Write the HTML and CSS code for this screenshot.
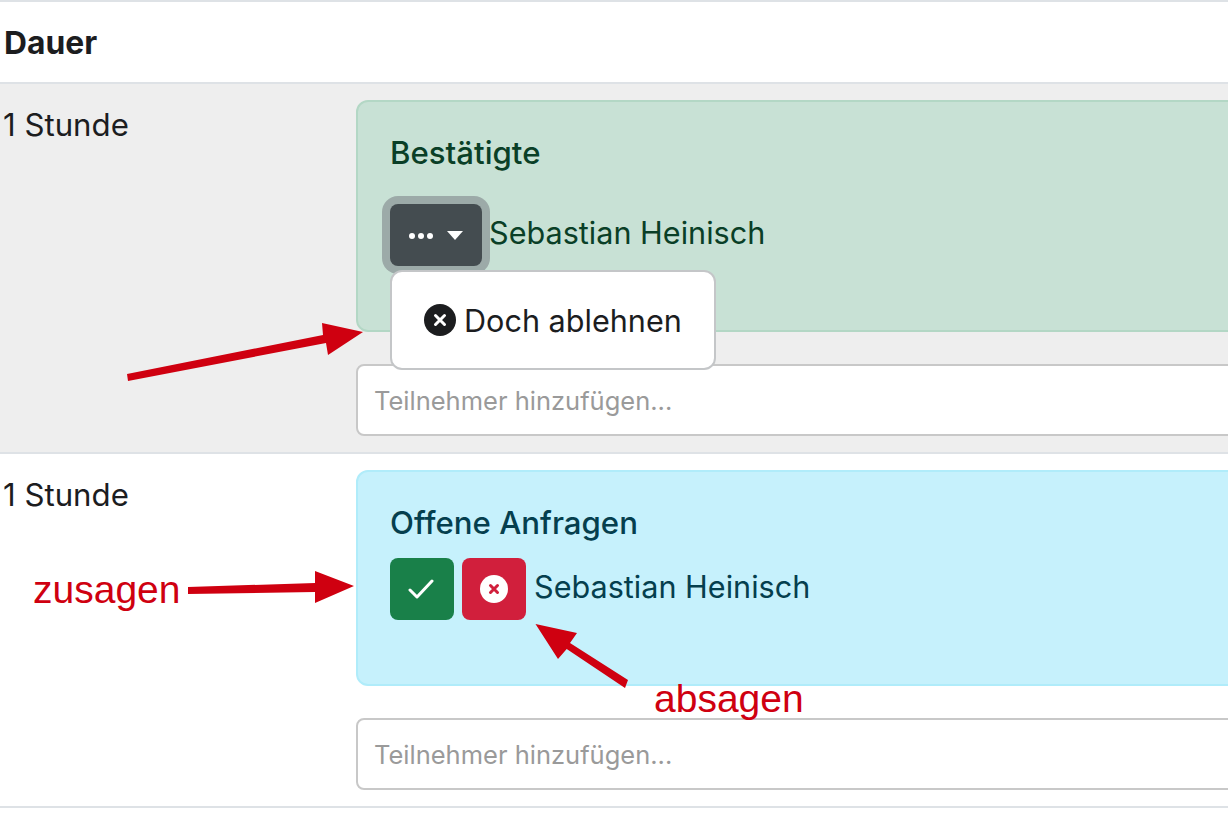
FILE: index.html
```html
<!DOCTYPE html>
<html lang="de">
<head>
<meta charset="utf-8">
<title>Dauer</title>
<link rel="stylesheet" href="styles.css">
</head>
<body>
<div class="table">
  <div class="head">Dauer</div>
  <div class="row row-grey">
    <div class="duration">1 Stunde</div>
    <div class="main">
      <div class="alert alert-green">
        <h4 class="title">Bestätigte</h4>
        <div class="person">
          <button class="btn btn-dark"><span class="dots"><i></i><i></i><i></i></span><span class="caret"></span></button>
          <span class="name">Sebastian Heinisch</span>
        </div>
        <div class="menu">
          <svg class="menu-icon" viewBox="0 0 32 32"><circle cx="16" cy="16" r="16" fill="#1c1d1f"/><path d="M11.5 11.5l9 9M20.5 11.500l-9 9" stroke="#fff" stroke-width="3" stroke-linecap="round"/></svg>
          <span>Doch ablehnen</span>
        </div>
      </div>
      <div class="input">Teilnehmer hinzufügen...</div>
    </div>
  </div>
  <div class="row">
    <div class="duration">1 Stunde</div>
    <div class="main">
      <div class="alert alert-blue">
        <h4 class="title">Offene Anfragen</h4>
        <div class="person person-tight">
          <button class="btn btn-green"><svg class="check" viewBox="0 0 26 20"><path d="M2 11l7 7L24 2" fill="none" stroke="#fff" stroke-width="3" stroke-linecap="round" stroke-linejoin="round"/></svg></button>
          <button class="btn btn-red"><svg class="x-icon" viewBox="0 0 28 28"><circle cx="14" cy="14" r="14" fill="#fff"/><path d="M10.500 10.500l7 7M17.500 10.500l-7 7" stroke="#d11f3c" stroke-width="3" stroke-linecap="round"/></svg></button>
          <span class="name name-blue">Sebastian Heinisch</span>
        </div>
      </div>
      <div class="input">Teilnehmer hinzufügen...</div>
    </div>
  </div>
</div>
<svg class="arrows" viewBox="0 0 1228 836">
  <g fill="#cf0010">
    <polygon points="127,374 323,335 322,323 363,332 328,355 326,343 128,381"/>
    <polygon points="188,587 315,583 315,571 354,586 315,603 315,592 188,594"/>
    <polygon points="535.500,624 577,633 570,643 628,680 625,688 566.700,649 558,659"/>
  </g>
</svg>
<span class="note note-yes">zusagen</span>
<span class="note note-no">absagen</span>
</body>
</html>
```
FILE: styles.css
```css
* { box-sizing: border-box; }
html, body { margin: 0; height: 836px; overflow: hidden; background: #fff; }
body { position: relative; font-family: Inter, "Liberation Sans", Arial, sans-serif; color: #1c1d1f; font-size: 30.600px; }
.table { border-top: 2px solid #dee2e6; }
.head { height: 82px; padding: 23px 4px 0; font-weight: 700; font-size: 31.800px; line-height: 36px; border-bottom: 2px solid #dee2e6; }
.row { display: grid; grid-template-columns: 356px 1fr; padding: 16px 0; border-bottom: 2px solid #dee2e6; }
.row-grey { background: #eeeeee; }
.duration { padding: 1px 0 0 3px; font-size: 31.200px; line-height: 48px; height: 49px; }
.main { display: flex; flex-direction: column; gap: 32px; margin-right: -40px; }
.alert { position: relative; border: 2px solid; border-radius: 12px; padding: 32px 32px 64px; }
.alert-green { background: #c8e1d5; border-color: #b3d7c5; color: #0a3f27; }
.alert-blue { background: #c6f1fc; border-color: #b0ecfa; color: #053f4e; }
.title { margin: 0 0 32px; font-size: 31.200px; font-weight: 500; line-height: 38px; }
.person { display: flex; align-items: center; gap: 8px; height: 62px; }
.person-tight { margin-top: -17px; }
.alert-blue .title { margin-bottom: 33px; }
.name { margin: -6px 0 0 -1px; }
.name-blue { margin-left: 0; }
.btn { display: flex; align-items: center; justify-content: center; height: 62px; border: 0; padding: 0; border-radius: 8px; }
.btn-dark { width: 92px; gap: 12px; background: #444c50; box-shadow: 0 0 0 8px #9caaa8; }
.btn-green { width: 64px; background: #198049; }
.btn-red { width: 64px; background: #d11f3c; }
.dots { display: flex; gap: 3px; margin-top: 2px; }
.dots i { width: 6px; height: 6px; border-radius: 50%; background: #fff; }
.caret { width: 0; height: 0; margin-left: 2px; border: 8px solid transparent; border-top: 9px solid #fff; border-bottom: 0; }
.check { width: 26px; height: 20px; margin-right: 2px; }
.x-icon { width: 28px; height: 28px; }
.menu { position: absolute; left: 32px; top: 168px; width: 326px; height: 100px; display: flex; align-items: center; gap: 8px; padding-left: 32px; background: #fff; border: 2px solid #c4c6c8; border-radius: 12px; color: #1c1d1f; }
.menu-icon { width: 32px; height: 32px; }
.input { height: 72px; padding-left: 16px; display: flex; align-items: center; font-size: 25.500px; color: #9a9a9a; background: #fff; border: 2px solid #c8c8c8; border-radius: 8px; }
.arrows { position: absolute; left: 0; top: 0; width: 1228px; height: 836px; }
.note { position: absolute; color: #cf0010; font-size: 39px; line-height: 44px; font-family: "Liberation Sans", Arial, sans-serif; }
.note-yes { left: 33px; top: 568px; }
.note-no { left: 654px; top: 677px; }
```
